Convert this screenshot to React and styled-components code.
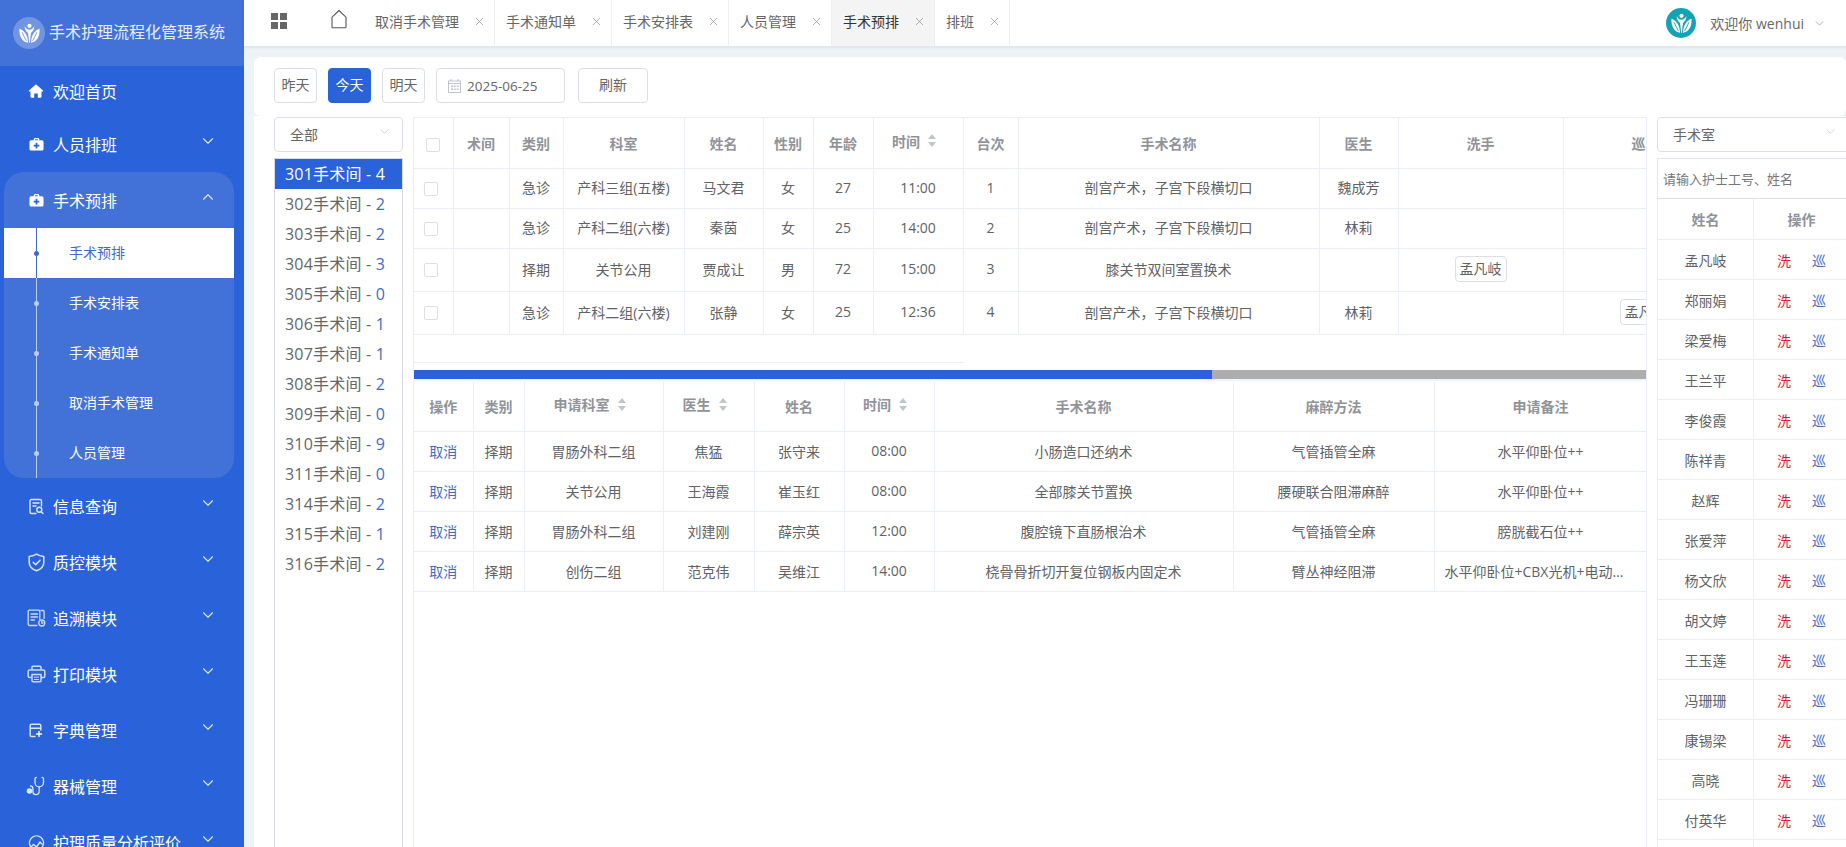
import React from "react";
import styled, { createGlobalStyle } from "styled-components";
import { ChevronDown, ChevronUp, X } from "lucide-react";

const fontStack = `"Open Sans", "Noto Sans CJK SC", sans-serif`;

const GlobalStyle = createGlobalStyle`
  html, body {
    margin: 0;
    padding: 0;
    height: 100%;
    overflow: hidden;
    background: #edf3f7;
    font-family: ${fontStack};
    color: #606266;
  }
  * { box-sizing: border-box; }
`;

const rooms = [
  ["301", 4], ["302", 2], ["303", 2], ["304", 3], ["305", 0], ["306", 1], ["307", 1],
  ["308", 2], ["309", 0], ["310", 9], ["311", 0], ["314", 2], ["315", 1], ["316", 2],
];

const tabs = ["取消手术管理", "手术通知单", "手术安排表", "人员管理", "手术预排", "排班"];

const topCols = [39, 56, 54, 121, 79, 50, 60, 90, 55, 301, 79, 165, 165];
const bottomCols = [59, 51, 139, 91, 90, 90, 299, 201, 213];

const csOp = "剖宫产术\uFF0C子宫下段横切口";

const topRows = [
  { h: 40, type: "急诊", dept: "产科三组(五楼)", name: "马文君", sex: "女", age: 27, time: "11:00", no: 1, op: csOp, doc: "魏成芳" },
  { h: 40, type: "急诊", dept: "产科二组(六楼)", name: "秦茵", sex: "女", age: 25, time: "14:00", no: 2, op: csOp, doc: "林莉" },
  { h: 43, type: "择期", dept: "关节公用", name: "贾成让", sex: "男", age: 72, time: "15:00", no: 3, op: "膝关节双间室置换术", doc: "", wash: "孟凡岐" },
  { h: 43, type: "急诊", dept: "产科二组(六楼)", name: "张静", sex: "女", age: 25, time: "12:36", no: 4, op: csOp, doc: "林莉", tour: "孟凡岐" },
];

const bottomRows = [
  { type: "择期", dept: "胃肠外科二组", doc: "焦猛", name: "张守来", time: "08:00", op: "小肠造口还纳术", ana: "气管插管全麻", note: "水平仰卧位++" },
  { type: "择期", dept: "关节公用", doc: "王海霞", name: "崔玉红", time: "08:00", op: "全部膝关节置换", ana: "腰硬联合阻滞麻醉", note: "水平仰卧位++" },
  { type: "择期", dept: "胃肠外科二组", doc: "刘建刚", name: "薛宗英", time: "12:00", op: "腹腔镜下直肠根治术", ana: "气管插管全麻", note: "膀胱截石位++" },
  { type: "择期", dept: "创伤二组", doc: "范克伟", name: "吴维江", time: "14:00", op: "桡骨骨折切开复位钢板内固定术", ana: "臂丛神经阻滞", note: "水平仰卧位+CBX光机+电动止血仪+腔镜" },
];

const nurses = ["孟凡岐", "郑丽娟", "梁爱梅", "王兰平", "李俊霞", "陈祥青", "赵辉", "张爱萍", "杨文欣", "胡文婷", "王玉莲", "冯珊珊", "康锡梁", "高晓", "付英华", "周静"];

function LogoMark({ vein }) {
  return (
    <svg width="21" height="21" viewBox="0 0 24 24" fill="#fff">
      <circle cx="12" cy="3.200" r="2.400" />
      <path d="M6.500 3.500c1.500 3 3 4.300 5.500 4.300s4-1.300 5.500-4.300c.2 3.800-1.800 6.500-3.800 8-.6 3.500-.9 7-1.200 11h-1c-.3-4-.6-7.500-1.200-11-2-1.500-4-4.200-3.800-8z" />
      <path d="M.5 6.500c4.500 1.500 9.500 6 9.800 16C4.500 22 0 16 .5 6.500z" />
      <path d="M23.500 6.500c-4.500 1.500-9.500 6-9.800 16 5.800-.5 10.300-6.500 9.800-16z" />
      <path d="M3.500 10.500c1.500 3.500 3 6.500 5 10M20.500 10.500c-1.500 3.500-3 6.500-5 10" fill="none" stroke={vein} strokeWidth="1" />
    </svg>
  );
}

function HomeIcon() {
  return (
    <svg width="16" height="16" viewBox="0 0 16 16" fill="#fff">
      <path d="M8 1.200 1 7.400c-.4.400-.1 1 .4 1H2.500v5.400c0 .5.400.9.900.9h2.800v-4.200h3.600v4.200h2.800c.5 0 .9-.4.900-.9V8.400h1.100c.5 0 .8-.6.400-1z" />
    </svg>
  );
}

function KitIcon() {
  return (
    <svg width="15" height="15" viewBox="0 0 16 16">
      <path fill="#fff" d="M5 3.500V2.600C5 1.700 5.700 1 6.600 1h2.800C10.300 1 11 1.700 11 2.600v.9h2.800c.9 0 1.700.8 1.700 1.700v7.600c0 .9-.8 1.700-1.700 1.700H2.200c-.9 0-1.700-.8-1.700-1.700V5.200c0-.9.800-1.700 1.700-1.700zm1.400 0h3.200v-.7c0-.2-.2-.4-.4-.4H6.800c-.2 0-.4.200-.4.400z" />
      <path fill="#2962d9" d="M7.100 6.200h1.800v2.100H11v1.800H8.900v2.100H7.100v-2.100H5V8.300h2.100z" />
    </svg>
  );
}

function SearchDocIcon() {
  return (
    <svg width="17" height="17" viewBox="0 0 17 17" fill="none" stroke="#dce7ff" strokeWidth="1.400" strokeLinecap="round">
      <path d="M8 15.500H3.500c-.9 0-1.500-.6-1.500-1.500V3c0-.9.600-1.500 1.500-1.500h8.500c.9 0 1.500.6 1.500 1.500v5" />
      <path d="M5 5h6M5 8h3" />
      <circle cx="11.300" cy="11.800" r="2.500" />
      <path d="m13.200 13.700 1.800 1.800" />
    </svg>
  );
}

function ShieldIcon() {
  return (
    <svg width="19" height="19" viewBox="0 0 19 19" fill="none" stroke="#dce7ff" strokeWidth="1.500" strokeLinecap="round" strokeLinejoin="round">
      <path d="M9.500 1.200c2 1.300 4.500 2 7.300 2.200v6.100c0 3.800-3 6.700-7.300 8.300-4.300-1.600-7.300-4.500-7.300-8.300V3.400c2.800-.2 5.300-.9 7.300-2.200z" />
      <path d="m6.200 9.300 2.500 2.500 4.300-4.500" />
    </svg>
  );
}

function TraceIcon() {
  return (
    <svg width="19" height="18" viewBox="0 0 19 18" fill="none" stroke="#c9dafc" strokeWidth="1.300" strokeLinecap="round">
      <path d="M10 16.500H2.500c-.8 0-1.300-.5-1.300-1.300V2.500c0-.8.500-1.300 1.300-1.300h9c.8 0 1.300.5 1.300 1.300v8" />
      <path d="M4 5h6.500M4 8h6.500M4 11h3.500" />
      <path d="M14 1.500h2.200c.5 0 .9.400.9.900v7" />
      <circle cx="14.800" cy="14" r="3" />
      <path d="M14.800 12.500V14h1.300" />
    </svg>
  );
}

function PrinterIcon() {
  return (
    <svg width="19" height="18" viewBox="0 0 19 18" fill="none" stroke="#c9dafc" strokeWidth="1.500" strokeLinejoin="round">
      <path d="M5 5V2.200c0-.6.400-1 1-1h7c.6 0 1 .4 1 1V5" />
      <path d="M5 12.500H2.700c-.8 0-1.500-.7-1.500-1.500V6.500C1.200 5.700 1.900 5 2.700 5h13.600c.8 0 1.500.7 1.500 1.500V11c0 .8-.7 1.500-1.500 1.500H14" />
      <path d="M5 9.500h9v6.300c0 .6-.4 1-1 1H6c-.6 0-1-.4-1-1z" />
      <path d="M7 12.200h5M7 14.500h5" strokeWidth="1" />
    </svg>
  );
}

function DictIcon() {
  return (
    <svg width="14" height="15" viewBox="0 0 14 15" fill="none" stroke="#dce7ff" strokeWidth="1.400" strokeLinecap="round">
      <path d="M6 13.500H2.500c-.8 0-1.300-.5-1.300-1.300V2.500c0-.8.500-1.300 1.300-1.300h8c.8 0 1.300.5 1.300 1.300v4.500" />
      <path d="M1.500 5.300h10" />
      <path d="M10 8.500v5M7.500 11h5" stroke="#fff" />
    </svg>
  );
}

function StethoscopeIcon() {
  return (
    <svg width="20" height="20" viewBox="0 0 20 20" fill="none" stroke="#dce7ff" strokeWidth="1.300" strokeLinecap="round">
      <path d="M10.500 1.300c-.9 0-1.500.6-1.500 1.500v3.700c0 2.500 1.900 4.400 4.200 4.400s4.300-1.900 4.300-4.400V2.800c0-.9-.6-1.500-1.500-1.500" />
      <path d="M13.200 11v4c0 2-1.400 3.600-3.300 3.600-1.800 0-3-1.300-3-3.200v-2.600c0-1.700-1-2.800-2.400-2.800" />
      <circle cx="3.500" cy="15" r="2.800" fill="#dce7ff" stroke="none" />
    </svg>
  );
}

function AnalysisIcon() {
  return (
    <svg width="17" height="17" viewBox="0 0 17 17" fill="none" stroke="#dce7ff" strokeWidth="1.400" strokeLinecap="round" strokeLinejoin="round">
      <path d="M2.500 12.500a7 7 0 1 1 12 0" />
      <path d="m1.500 14.500 4-4 3 2.500 3.500-5 2 2" />
    </svg>
  );
}

function HomeOutline() {
  return (
    <svg width="18" height="20" viewBox="0 0 18 20" fill="none" stroke="#555" strokeWidth="1.100">
      <path d="M9 1.500 2 8.200v9.800c0 .5.300.8.800.8h12.400c.5 0 .8-.3.800-.8V8.200z" />
    </svg>
  );
}

function CalendarIcon() {
  return (
    <svg width="13" height="14" viewBox="0 0 13 14" fill="#c0c4cc">
      <path d="M2.500 0h1v1.500h6V0h1v1.500H13V14H0V1.500h2.500zM1 5v8h11V5zM1 2.500V4h11V2.500z" />
      <path d="M3 6.500h2v1.500H3zM5.800 6.500h2v1.500h-2zM8.600 6.500h2v1.500h-2zM3 9.500h2V11H3zM5.800 9.500h2V11h-2zM8.600 9.500h2V11h-2z" />
    </svg>
  );
}

function CaretDown() {
  return (
    <Caret>
      <ChevronDown size={18} strokeWidth={1.500} />
    </Caret>
  );
}

function App() {
  return (
    <Shell>
      <GlobalStyle />
      <Sidebar>
        <Brand>
          <BrandCircle><LogoMark vein="#6d91e0" /></BrandCircle>
          <BrandTitle>手术护理流程化管理系统</BrandTitle>
        </Brand>
        <MenuItem $height={50}><MenuIcon><HomeIcon /></MenuIcon>欢迎首页</MenuItem>
        <MenuItem $height={56}><MenuIcon><KitIcon /></MenuIcon>人员排班<CaretDown /></MenuItem>
        <MenuGroup>
          <MenuItem $height={56}><MenuIcon><KitIcon /></MenuIcon>手术预排<Caret><ChevronUp size={18} strokeWidth={1.500} /></Caret></MenuItem>
          <SubMenuItem $active>手术预排</SubMenuItem>
          <SubMenuItem>手术安排表</SubMenuItem>
          <SubMenuItem>手术通知单</SubMenuItem>
          <SubMenuItem>取消手术管理</SubMenuItem>
          <SubMenuItem>人员管理</SubMenuItem>
        </MenuGroup>
        <MenuItem $height={56}><MenuIcon><SearchDocIcon /></MenuIcon>信息查询<CaretDown /></MenuItem>
        <MenuItem $height={56}><MenuIcon><ShieldIcon /></MenuIcon>质控模块<CaretDown /></MenuItem>
        <MenuItem $height={56}><MenuIcon><TraceIcon /></MenuIcon>追溯模块<CaretDown /></MenuItem>
        <MenuItem $height={56}><MenuIcon><PrinterIcon /></MenuIcon>打印模块<CaretDown /></MenuItem>
        <MenuItem $height={56}><MenuIcon><DictIcon /></MenuIcon>字典管理<CaretDown /></MenuItem>
        <MenuItem $height={56}><MenuIcon><StethoscopeIcon /></MenuIcon>器械管理<CaretDown /></MenuItem>
        <MenuItem $height={56}><MenuIcon><AnalysisIcon /></MenuIcon>护理质量分析评价<CaretDown /></MenuItem>
      </Sidebar>

      <Main>
        <TopBar>
          <GridButton>
            <i /><i /><i /><i />
          </GridButton>
          <HomeTab><HomeOutline /></HomeTab>
          <TabStrip>
            {tabs.map((t) => (
              <Tab key={t} $active={t === "手术预排"}>
                {t}
                <TabClose><X size={13} strokeWidth={1.200} /></TabClose>
              </Tab>
            ))}
          </TabStrip>
          <UserBox>
            <Avatar><LogoMark vein="#15a3b3" /></Avatar>
            <UserName>欢迎你 wenhui</UserName>
            <ChevronDown size={13} strokeWidth={1.200} color="#888" />
          </UserBox>
        </TopBar>

        <Content>
          <Toolbar>
            <DayButton>昨天</DayButton>
            <DayButton $primary>今天</DayButton>
            <DayButton>明天</DayButton>
            <DateBox><CalendarIcon />2025-06-25</DateBox>
            <RefreshButton>刷新</RefreshButton>
          </Toolbar>

          <Board>
            <RoomColumn>
              <SelectBox>全部<ChevronDown size={15} strokeWidth={1} color="#bbb" /></SelectBox>
              <RoomList>
                {rooms.map(([room, count], i) => (
                  <RoomItem key={room} $active={i === 0}>
                    {room}手术间 - <b>{count}</b>
                  </RoomItem>
                ))}
              </RoomList>
            </RoomColumn>

            <TableColumn>
              <TopTableWrap>
                <DataTable $cols={topCols}>
                  <colgroup>{topCols.map((w, i) => <col key={i} width={w} />)}</colgroup>
                  <thead>
                    <tr>
                      <HeadCell $height={50}><CheckBox /></HeadCell>
                      <HeadCell>术间</HeadCell>
                      <HeadCell>类别</HeadCell>
                      <HeadCell>科室</HeadCell>
                      <HeadCell>姓名</HeadCell>
                      <HeadCell>性别</HeadCell>
                      <HeadCell>年龄</HeadCell>
                      <HeadCell><SortLabel>时间<SortMark /></SortLabel></HeadCell>
                      <HeadCell>台次</HeadCell>
                      <HeadCell>手术名称</HeadCell>
                      <HeadCell>医生</HeadCell>
                      <HeadCell>洗手</HeadCell>
                      <HeadCell>巡回</HeadCell>
                    </tr>
                  </thead>
                  <tbody>
                    {topRows.map((r) => (
                      <tr key={r.no}>
                        <BodyCell $height={r.h}><CheckBox $body /></BodyCell>
                        <BodyCell />
                        <BodyCell>{r.type}</BodyCell>
                        <BodyCell>{r.dept}</BodyCell>
                        <BodyCell>{r.name}</BodyCell>
                        <BodyCell>{r.sex}</BodyCell>
                        <BodyCell>{r.age}</BodyCell>
                        <BodyCell>{r.time}</BodyCell>
                        <BodyCell>{r.no}</BodyCell>
                        <BodyCell>{r.op}</BodyCell>
                        <BodyCell>{r.doc}</BodyCell>
                        <BodyCell>{r.wash && <NurseChip>{r.wash}</NurseChip>}</BodyCell>
                        <BodyCell>{r.tour && <NurseChip>{r.tour}</NurseChip>}</BodyCell>
                      </tr>
                    ))}
                  </tbody>
                </DataTable>
                <ScrollGutter />
              </TopTableWrap>

              <SplitBar>
                <SplitThumb />
                <SplitTrack />
              </SplitBar>

              <BottomTableWrap>
                <DataTable $cols={bottomCols}>
                  <colgroup>{bottomCols.map((w, i) => <col key={i} width={w} />)}</colgroup>
                  <thead>
                    <tr>
                      <HeadCell $height={50}>操作</HeadCell>
                      <HeadCell>类别</HeadCell>
                      <HeadCell><SortLabel>申请科室<SortMark /></SortLabel></HeadCell>
                      <HeadCell><SortLabel>医生<SortMark /></SortLabel></HeadCell>
                      <HeadCell>姓名</HeadCell>
                      <HeadCell><SortLabel>时间<SortMark /></SortLabel></HeadCell>
                      <HeadCell>手术名称</HeadCell>
                      <HeadCell>麻醉方法</HeadCell>
                      <HeadCell>申请备注</HeadCell>
                    </tr>
                  </thead>
                  <tbody>
                    {bottomRows.map((r) => (
                      <tr key={r.name}>
                        <BodyCell $height={40}><LinkText>取消</LinkText></BodyCell>
                        <BodyCell>{r.type}</BodyCell>
                        <BodyCell>{r.dept}</BodyCell>
                        <BodyCell>{r.doc}</BodyCell>
                        <BodyCell>{r.name}</BodyCell>
                        <BodyCell>{r.time}</BodyCell>
                        <BodyCell>{r.op}</BodyCell>
                        <BodyCell>{r.ana}</BodyCell>
                        <BodyCell $ellipsis>{r.note}</BodyCell>
                      </tr>
                    ))}
                  </tbody>
                </DataTable>
              </BottomTableWrap>
            </TableColumn>

            <NurseColumn>
              <SelectBox>手术室<ChevronDown size={15} strokeWidth={1} color="#bbb" /></SelectBox>
              <SearchInput placeholder="请输入护士工号、姓名" />
              <NurseHead>
                <NurseName $head>姓名</NurseName>
                <NurseOps $head>操作</NurseOps>
              </NurseHead>
              {nurses.map((n) => (
                <NurseRow key={n}>
                  <NurseName>{n}</NurseName>
                  <NurseOps>
                    <WashText>洗</WashText>
                    <TourText>巡</TourText>
                  </NurseOps>
                </NurseRow>
              ))}
            </NurseColumn>
          </Board>
        </Content>
      </Main>
    </Shell>
  );
}

export default App;

const Shell = styled.div`
  display: flex;
  width: 100vw;
  height: 100vh;
  overflow: hidden;
`;

const Sidebar = styled.aside`
  width: 244px;
  flex: none;
  height: 100%;
  overflow: hidden;
  background: #2962d9;
  color: #fff;
`;

const Brand = styled.div`
  height: 66px;
  display: flex;
  align-items: center;
  padding-left: 13px;
  background: #4272d7;
`;

const BrandCircle = styled.div`
  width: 32px;
  height: 32px;
  border-radius: 50%;
  background: rgba(255, 255, 255, 0.25);
  display: flex;
  align-items: center;
  justify-content: center;
`;

const BrandTitle = styled.div`
  margin-left: 4px;
  padding-bottom: 4px;
  font-size: 16px;
  white-space: nowrap;
  color: #e6edfb;
`;

const MenuItem = styled.div`
  height: ${(p) => p.$height}px;
  display: flex;
  align-items: center;
  padding-left: 26px;
  font-size: 16px;
  white-space: nowrap;
`;

const MenuIcon = styled.span`
  width: 20px;
  margin-right: 7px;
  display: flex;
  justify-content: center;
`;

const Caret = styled.span`
  margin-left: auto;
  margin-right: 27px;
  margin-top: -6px;
  display: flex;
  color: #dce7ff;
`;

const MenuGroup = styled.div`
  margin: 0 10px 0 4px;
  background: #4272d7;
  border-radius: 20px;
  overflow: hidden;

  ${MenuItem} {
    padding-left: 22px;
  }
  ${Caret} {
    margin-right: 17px;
  }
`;

const SubMenuItem = styled.div`
  height: 50px;
  display: flex;
  align-items: center;
  padding: 0 0 2px 65px;
  font-size: 14px;
  position: relative;
  background: ${(p) => (p.$active ? "#fff" : "transparent")};
  color: ${(p) => (p.$active ? "#3e6bc8" : "#fff")};

  &::before {
    content: "";
    position: absolute;
    left: 32px;
    top: 0;
    bottom: 0;
    width: 1px;
    background: ${(p) => (p.$active ? "#3e6bc8" : "#b9cdf5")};
  }
  &::after {
    content: "";
    position: absolute;
    left: 30px;
    top: 23px;
    width: 5px;
    height: 5px;
    border-radius: 50%;
    background: ${(p) => (p.$active ? "#3e6bc8" : "#b9cdf5")};
  }
`;

const Main = styled.div`
  flex: 1;
  min-width: 0;
  display: flex;
  flex-direction: column;
`;

const TopBar = styled.header`
  height: 47px;
  flex: none;
  display: flex;
  align-items: center;
  background: #fff;
  border-bottom: 1px solid #e2e6ea;
  box-shadow: 0 1px 2px rgba(0, 0, 0, 0.06);
  color: #666;
`;

const GridButton = styled.div`
  width: 16px;
  height: 16px;
  margin-left: 27px;
  margin-top: -5px;
  display: grid;
  grid-template-columns: 7px 7px;
  grid-template-rows: 7px 7px;
  gap: 2px;

  i {
    background: #666;
    display: block;
  }
`;

const HomeTab = styled.div`
  margin-left: 43px;
  margin-top: -8px;
  display: flex;
`;

const TabStrip = styled.div`
  display: flex;
  height: 46px;
  margin-left: 16px;
`;

const Tab = styled.div`
  display: flex;
  align-items: center;
  padding: 0 0 4px 11px;
  font-size: 14px;
  white-space: nowrap;
  border-right: 1px solid #eee;
  background: ${(p) => (p.$active ? "#f4f4f4" : "#fff")};
  color: ${(p) => (p.$active ? "#333" : "#666")};
`;

const TabClose = styled.span`
  width: 35px;
  display: flex;
  justify-content: center;
  padding-left: 5px;
  color: #888;
`;

const UserBox = styled.div`
  margin-left: auto;
  margin-right: 20px;
  display: flex;
  align-items: center;
`;

const Avatar = styled.div`
  width: 30px;
  height: 30px;
  border-radius: 50%;
  background: #15a3b3;
  display: flex;
  align-items: center;
  justify-content: center;
`;

const UserName = styled.span`
  margin: 0 9px 0 14px;
  font-size: 14px;
  white-space: nowrap;
  color: #666;
`;

const Content = styled.div`
  flex: 1;
  min-height: 0;
  padding: 10px 0 0 10px;
  display: flex;
  flex-direction: column;
  overflow: hidden;
`;

const Toolbar = styled.div`
  height: 59px;
  flex: none;
  padding: 11px 20px 0;
  display: flex;
  background: #fff;
  border-radius: 6px;
  box-shadow: 0 0 1px rgba(0, 0, 0, 0.08);
`;

const DayButton = styled.button`
  width: 43px;
  height: 35px;
  margin-right: 11px;
  padding: 0 0 3px;
  font: 14px ${fontStack};
  border: 1px solid ${(p) => (p.$primary ? "#2962d9" : "#dcdfe6")};
  border-radius: 4px;
  background: ${(p) => (p.$primary ? "#2962d9" : "#fff")};
  color: ${(p) => (p.$primary ? "#fff" : "#666")};
`;

const DateBox = styled.div`
  width: 129px;
  height: 35px;
  margin-right: 13px;
  padding-left: 11px;
  display: flex;
  align-items: center;
  gap: 6px;
  font-size: 13.500px;
  border: 1px solid #dcdfe6;
  border-radius: 4px;
  color: #666;
`;

const RefreshButton = styled(DayButton)`
  width: 70px;
`;

const Board = styled.div`
  flex: 1;
  min-height: 0;
  padding: 1px 0 0 20px;
  display: grid;
  grid-template-columns: 129px 1234px 192px;
  column-gap: 10px;
  background: #fff;
  overflow: hidden;
`;

const RoomColumn = styled.div`
  display: flex;
  flex-direction: column;
  min-height: 0;
`;

const SelectBox = styled.div`
  height: 35px;
  flex: none;
  display: flex;
  align-items: center;
  justify-content: space-between;
  padding: 0 10px 2px 15px;
  font-size: 14px;
  border: 1px solid #dcdfe6;
  border-radius: 4px;
  color: #666;

  svg {
    margin-top: -4px;
  }
`;

const RoomList = styled.div`
  flex: 1;
  margin-top: 6px;
  border: 1px solid #d8dadf;
  border-bottom: none;
  font-size: 16px;
  letter-spacing: 0.2px;
  color: #666;
`;

const RoomItem = styled.div`
  height: 30px;
  line-height: 30px;
  padding-left: 10px;
  white-space: nowrap;
  background: ${(p) => (p.$active ? "#2962d9" : "#fff")};
  color: ${(p) => (p.$active ? "#fff" : "#666")};

  b {
    font-weight: 400;
    color: ${(p) => (p.$active ? "#fff" : "#3e6bc8")};
  }
`;

const TableColumn = styled.div`
  min-width: 0;
  display: flex;
  flex-direction: column;
  border-left: 1px solid #ebeef5;
  border-right: 1px solid #ebeef5;
  overflow: hidden;
`;

const TopTableWrap = styled.div`
  flex: none;
  border-top: 1px solid #ebeef5;
  overflow: hidden;
`;

const DataTable = styled.table`
  table-layout: fixed;
  border-collapse: collapse;
  width: ${(p) => p.$cols.reduce((a, b) => a + b, 0)}px;
`;

const HeadCell = styled.th`
  height: ${(p) => (p.$height ? `${p.$height}px` : "auto")};
  padding: 0;
  text-align: center;
  font-size: 14px;
  font-weight: 700;
  color: #909399;
  border-right: 1px solid #ebeef5;
  border-bottom: 1px solid #ebeef5;
  white-space: nowrap;
`;

const BodyCell = styled.td`
  height: ${(p) => (p.$height ? `${p.$height}px` : "auto")};
  padding: 0 ${(p) => (p.$ellipsis ? "10px" : "0")} 2px;
  text-align: center;
  font-size: 14px;
  color: #606266;
  border-right: 1px solid #ebeef5;
  border-bottom: 1px solid #ebeef5;
  white-space: nowrap;
  overflow: hidden;
  text-overflow: ellipsis;
`;

const CheckBox = styled.span`
  display: inline-block;
  width: 14px;
  height: 14px;
  margin-right: ${(p) => (p.$body ? "4px" : "0")};
  vertical-align: middle;
  border: 1px solid #dcdfe6;
  border-radius: 2px;
  background: #fff;
`;

const SortLabel = styled.span`
  display: inline-flex;
  align-items: center;
  padding-bottom: 4px;
  vertical-align: middle;
`;

const SortMark = styled.span`
  display: inline-block;
  width: 9px;
  height: 13px;
  margin: 0 7px 0 8px;
  position: relative;

  &::before,
  &::after {
    content: "";
    position: absolute;
    left: 0;
    border-left: 4.500px solid transparent;
    border-right: 4.500px solid transparent;
  }
  &::before {
    top: 0;
    border-bottom: 5.500px solid #c0c4cc;
  }
  &::after {
    bottom: 0;
    border-top: 5.500px solid #c0c4cc;
  }
`;

const NurseChip = styled.span`
  display: inline-block;
  width: 52px;
  height: 26px;
  line-height: 24px;
  text-align: center;
  font-size: 14px;
  border: 1px solid #dcdfe6;
  border-radius: 4px;
  color: #606266;
`;

const ScrollGutter = styled.div`
  width: 550px;
  height: 28px;
  border-bottom: 1px solid #ebeef5;
`;

const SplitBar = styled.div`
  flex: none;
  display: flex;
  height: 9px;
  margin: 7px 0 0 -1px;
  box-shadow: 0 2px 2px #eef2fb;
`;

const SplitThumb = styled.div`
  flex: 0 0 799px;
  background: #2962d9;
`;

const SplitTrack = styled.div`
  flex: 1;
  background: #aeaeae;
`;

const BottomTableWrap = styled.div`
  flex: 1;
  margin-top: 3px;
  overflow: hidden;
`;

const LinkText = styled.span`
  color: #3e6bc8;
`;

const NurseColumn = styled.div`
  display: flex;
  flex-direction: column;
  min-height: 0;
  overflow: hidden;
`;

const SearchInput = styled.input`
  height: 41px;
  flex: none;
  margin-top: 6px;
  padding: 0 5px;
  border: 1px solid #e4e7ed;
  border-bottom-color: #dcdfe6;
  font: 13px ${fontStack};
  outline: none;
  color: #666;

  &::placeholder {
    color: #777;
  }
`;

const NurseRow = styled.div`
  height: 40px;
  flex: none;
  display: flex;
  border-left: 1px solid #ebeef5;
  border-bottom: 1px solid #ebeef5;
`;

const NurseHead = styled(NurseRow)`
  height: 41px;
`;

const NurseName = styled.div`
  width: 96px;
  border-right: 1px solid #ebeef5;
  display: flex;
  align-items: center;
  justify-content: center;
  font-size: 14px;
  font-weight: ${(p) => (p.$head ? 700 : 400)};
  color: ${(p) => (p.$head ? "#909399" : "#606266")};
`;

const NurseOps = styled.div`
  flex: 1;
  display: flex;
  align-items: center;
  justify-content: center;
  gap: 21px;
  font-size: 14px;
  font-weight: ${(p) => (p.$head ? 700 : 400)};
  color: ${(p) => (p.$head ? "#909399" : "#606266")};
`;

const WashText = styled.span`
  color: #d9232a;
`;

const TourText = styled.span`
  color: #3e6bc8;
`;
